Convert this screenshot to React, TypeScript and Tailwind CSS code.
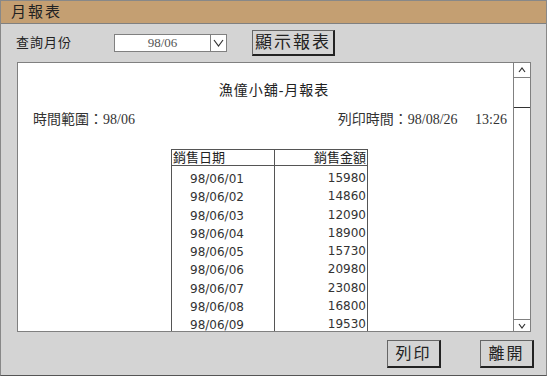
const rows = [
  ["98/06/01", "15980"],
  ["98/06/02", "14860"],
  ["98/06/03", "12090"],
  ["98/06/04", "18900"],
  ["98/06/05", "15730"],
  ["98/06/06", "20980"],
  ["98/06/07", "23080"],
  ["98/06/08", "16800"],
  ["98/06/09", "19530"],
]

const serif = "font-['Liberation_Serif','Noto_Sans_CJK_TC',serif]"
const sans = "font-['DejaVu_Sans','Noto_Sans_CJK_TC',sans-serif]"

export default function App() {
  return (
    <div className={`w-[547px] h-[376px] bg-[#d4d4d4] border border-[#888] border-b-[#555] flex flex-col ${serif} text-[#222]`}>
      {/* 標題列 */}
      <div className="h-[23px] bg-[#c49f72] border-b border-[#808080] pl-[10px] flex items-center text-[15px] tracking-[2px]">
        月報表
      </div>

      {/* 查詢列 */}
      <div className="h-[38px] flex items-center text-[13px]">
        <span className="ml-[15px] w-[98px] tracking-[1px]">查詢月份</span>
        <div className="w-[113px] h-[18px] flex border border-[#808080] bg-white">
          <span className="flex-1 text-center text-[13px] leading-[16px] text-[#555]">98/06</span>
          <span className="w-[16px] border-l border-[#808080] flex items-center justify-center">
            <svg width="11" height="8" viewBox="0 0 11 8"><path d="M1 1 L5.5 7 L10 1" fill="none" stroke="#333" strokeWidth="1.2" /></svg>
          </span>
        </div>
        <button className="ml-[25px] w-[83px] h-[26px] border border-[#666] border-r-2 border-b-2 border-r-[#222] border-b-[#222] bg-[#d4d4d4] text-[17px] tracking-[2px] flex items-center justify-center">
          顯示報表
        </button>
      </div>

      {/* 報表區 */}
      <div className="ml-[16px] w-[514px] h-[270px] border border-[#808080] bg-white flex overflow-hidden">
        <div className="flex-1 relative overflow-hidden">
          <div className="pl-[17px] pt-[17px] text-center text-[14px] tracking-[1px]">漁僮小舖-月報表</div>
          <div className="flex justify-between pl-[15px] pr-[6px] mt-[8px] text-[14px] text-[#333]">
            <span>時間範圍：98/06</span>
            <span>列印時間：98/08/26&nbsp;&nbsp;&nbsp;&nbsp;&nbsp;13:26</span>
          </div>
          <div className={`ml-[153px] mt-[19px] w-[197px] border-l border-r border-[#555] h-[200px] ${sans} text-[12px]`}>
            <div className="flex h-[17px] border-t border-b border-[#555] text-[13px] text-[#222]">
              <div className="w-[103px] border-r border-[#555] pl-[1px] leading-[15px]">銷售日期</div>
              <div className="flex-1 text-right pr-[1px] leading-[15px]">銷售金額</div>
            </div>
            <div className="flex h-[3px]">
              <div className="w-[103px] border-r border-[#555]" />
            </div>
            {rows.map(([d, v]) => (
              <div key={d} className="flex h-[18.25px] items-center text-[#333]">
                <div className="w-[103px] h-full border-r border-[#555] pl-[18px] leading-[20px]">{d}</div>
                <div className="flex-1 text-right pr-[1px] leading-[20px]">{v}</div>
              </div>
            ))}
          </div>
        </div>
        {/* 捲軸 */}
        <div className="w-[17px] border-l border-[#808080] flex flex-col">
          <div className="h-[15px] border-b border-[#808080] flex items-center justify-center">
            <svg width="8" height="6" viewBox="0 0 8 6"><path d="M1 5 L4 1 L7 5" fill="none" stroke="#333" strokeWidth="1.2" /></svg>
          </div>
          <div className="h-[30px] border-b border-[#333]" />
          <div className="flex-1" />
          <div className="h-[12px] border-t border-[#808080] flex items-center justify-center">
            <svg width="8" height="6" viewBox="0 0 8 6"><path d="M1 1 L4 5 L7 1" fill="none" stroke="#333" strokeWidth="1.2" /></svg>
          </div>
        </div>
      </div>

      {/* 按鈕列 */}
      <div className="flex justify-end gap-[39px] pr-[12px] pt-[8px]">
        <button className="w-[54px] h-[28px] border border-[#666] border-r-2 border-b-2 border-r-[#222] border-b-[#222] bg-[#d4d4d4] text-[16px] tracking-[2px] flex items-center justify-center">
          列印
        </button>
        <button className="w-[54px] h-[28px] border border-[#666] border-r-2 border-b-2 border-r-[#222] border-b-[#222] bg-[#d4d4d4] text-[16px] tracking-[2px] flex items-center justify-center">
          離開
        </button>
      </div>
    </div>
  )
}
